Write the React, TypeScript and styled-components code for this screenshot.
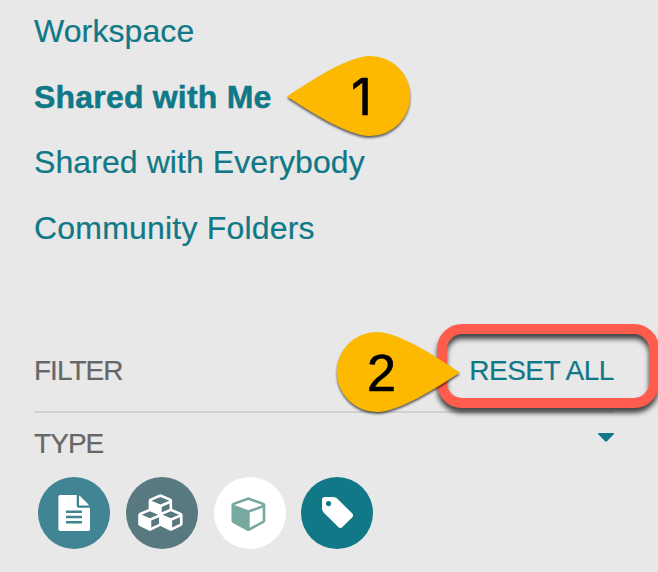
import React from 'react';
import styled, { createGlobalStyle } from 'styled-components';

const Global = createGlobalStyle`
  *, *::before, *::after { box-sizing: border-box; }
  body {
    margin: 0;
    background: #e8e8e8;
    font-family: 'Liberation Sans', Arial, sans-serif;
    overflow: hidden;
  }
`;

const Sidebar = styled.aside`
  position: relative;
  width: 658px;
  height: 572px;
  overflow: hidden;
  padding: 13px 44px 0 34px;
  background: #e8e8e8;
`;

const Nav = styled.nav`
  display: flex;
  flex-direction: column;
  align-items: flex-start;
  gap: 29.6px;
`;

const NavLink = styled.a<{ $active?: boolean; $spacing?: number }>`
  color: #107887;
  font-size: 32px;
  line-height: 36px;
  white-space: nowrap;
  font-weight: ${p => (p.$active ? 700 : 400)};
  letter-spacing: ${p => p.$spacing ?? 0}px;
  -webkit-text-stroke: ${p => (p.$active ? 0.5 : 0.2)}px currentColor;
`;

const FilterHeader = styled.header`
  display: flex;
  justify-content: space-between;
  align-items: center;
  height: 82px;
  margin-top: 85px;
  border-bottom: 2px solid #d0d0d0;
`;

const Label = styled.span<{ $spacing: number }>`
  color: #666;
  font-size: 28px;
  line-height: 32px;
  letter-spacing: ${p => p.$spacing}px;
  -webkit-text-stroke: 0.2px currentColor;
`;

const ResetLink = styled.a`
  color: #107887;
  font-size: 28px;
  line-height: 32px;
  letter-spacing: -0.45px;
  white-space: nowrap;
  -webkit-text-stroke: 0.2px currentColor;
`;

const TypeHeader = styled.div`
  display: flex;
  justify-content: space-between;
  align-items: center;
  height: 32px;
  margin-top: 15px;
`;

const Caret = styled.svg`
  display: block;
  width: 16px;
  height: 9px;
  margin-bottom: 13px;
`;

const TypeList = styled.div`
  display: flex;
  gap: 15.8px;
  margin: 17px 0 0 4px;
`;

const TypeButton = styled.button<{ $bg: string }>`
  width: 72px;
  height: 72px;
  padding: 0;
  border: 0;
  border-radius: 50%;
  background: ${p => p.$bg};
  svg { display: block; width: 72px; height: 72px; }
`;

const Highlight = styled.div`
  position: absolute;
  left: 437px;
  top: 324px;
  width: 222px;
  height: 84px;
  border: 10px solid #ff5c4d;
  border-radius: 25px;
  filter: drop-shadow(0 5px 2.5px rgba(0, 0, 0, 0.7));
`;

const Callout = styled.div<{ $x: number; $y: number; $side: 'left' | 'right' }>`
  position: absolute;
  left: ${p => p.$x}px;
  top: ${p => p.$y}px;
  width: 124px;
  height: 80px;
  display: flex;
  justify-content: ${p => (p.$side === 'left' ? 'flex-end' : 'flex-start')};
  svg {
    position: absolute;
    inset: 0;
    overflow: visible;
    transform: ${p => (p.$side === 'left' ? 'none' : 'scaleX(-1)')};
    filter: drop-shadow(0 2px 1.2px rgba(0, 0, 0, 0.6));
  }
`;

const Digit = styled.span<{ $font: string; $size: number; $shift: number }>`
  position: relative;
  width: 91px;
  padding-right: ${p => p.$shift}px;
  text-align: center;
  font-family: ${p => p.$font}, sans-serif;
  font-size: ${p => p.$size}px;
  line-height: 82px;
  color: #000;
  -webkit-text-stroke: 0.7px #000;
`;

interface MarkerProps {
  x: number;
  y: number;
  side: 'left' | 'right';
  font: string;
  size: number;
  shift?: number;
  children: React.ReactNode;
}

const Marker = ({ x, y, side, font, size, shift = 0, children }: MarkerProps) => (
  <Callout $x={x} $y={y} $side={side}>
    <svg width="124" height="80" viewBox="0 0 124 80">
      <path d="M0 40.500C22 26 61 0 83 0a40.300 40 0 0 1 0 80C61 80 22 55 0 40.500Z" fill="#fcb900" />
    </svg>
    <Digit $font={font} $size={size} $shift={shift}>{children}</Digit>
  </Callout>
);

const DocumentIcon = () => (
  <svg viewBox="0 0 72 72">
    <path d="M22.500 18H38.700v10.700q0 2 2 2H52V52.200q0 1.800-1.800 1.800h-28q-1.800 0-1.800-1.800V19.800q0-1.800 1.800-1.800Z" fill="#fff" />
    <path d="M41 18.600Q42 19 42.500 19.500L50 27Q50.500 27.500 51 28.500H41Z" fill="#fff" />
    <path d="M28 34.700h16M28 40h16M28 45.200h16" stroke="#418594" strokeWidth="2.400" />
  </svg>
);

const CubesIcon = () => (
  <svg viewBox="0 0 72 72">
    <path
      transform="translate(12.200 17.300) scale(.0204)"
      d="M640 1632l384-192v-314l-384 164v342zm-64-454l404-173-404-173-404 173zm1088 454l384-192v-314l-384 164v342zm-64-454l404-173-404-173-404 173zm-448-293l384-165v-266l-384 164v267zm-64-379l441-189-441-189-441 189zm1088 518v416q0 36-19 67t-52 47l-448 224q-25 14-57 14t-57-14l-448-224q-4-2-7-4-2 2-7 4l-448 224q-25 14-57 14t-57-14l-448-224q-33-16-52-47t-19-67v-416q0-38 21.500-70t56.500-48l434-186v-400q0-38 21.500-70t56.500-48l448-192q23-10 50-10t50 10l448 192q35 16 56.500 48t21.500 70v400l434 186q36 16 57 48t21 70z"
      fill="#fff"
      fillRule="evenodd"
    />
  </svg>
);

const CubeIcon = () => (
  <svg viewBox="0 0 72 72">
    <path
      transform="translate(17.500 17.700) scale(.0203)"
      d="M896 1629l640-349v-636l-640 233v752zm-64-865l698-254-698-254-698 254zm832-252v768q0 35-18 65t-49 47l-704 384q-28 16-61 16t-61-16l-704-384q-31-17-49-47t-18-65v-768q0-40 23-73t61-47l704-256q22-8 44-8t44 8l704 256q38 14 61 47t23 73z"
      fill="#77a99f"
      fillRule="evenodd"
    />
  </svg>
);

const TagIcon = () => (
  <svg viewBox="0 0 72 72">
    <path
      transform="translate(21 17.400) scale(.0205)"
      d="M448 448q0-53-37.500-90.500t-90.500-37.500-90.500 37.500-37.500 90.500 37.500 90.500 90.500 37.500 90.500-37.500 37.500-90.500zm1067 576q0 53-37 90l-491 492q-39 37-91 37-53 0-90-37l-715-716q-38-37-64.500-101t-26.500-117v-416q0-52 38-90t90-38h416q53 0 117 26.500t102 64.500l715 714q37 39 37 91z"
      fill="#fff"
      fillRule="evenodd"
    />
  </svg>
);

export default function App() {
  return (
    <>
      <Global />
      <Sidebar>
        <Nav>
          <NavLink $spacing={0.1}>Workspace</NavLink>
          <NavLink $active $spacing={0.2}>Shared with Me</NavLink>
          <NavLink $spacing={0.08}>Shared with Everybody</NavLink>
          <NavLink $spacing={0.2}>Community Folders</NavLink>
        </Nav>
        <FilterHeader>
          <Label $spacing={-1}>FILTER</Label>
          <ResetLink>RESET ALL</ResetLink>
        </FilterHeader>
        <TypeHeader>
          <Label $spacing={-0.95}>TYPE</Label>
          <Caret viewBox="0 0 16 9">
            <path d="M0 0H16L15.500 1.500 9 8.300Q8 9.200 7 8.300L.5 1.500Z" fill="#107887" />
          </Caret>
        </TypeHeader>
        <TypeList>
          <TypeButton $bg="#418594" aria-label="Documents"><DocumentIcon /></TypeButton>
          <TypeButton $bg="#58797f" aria-label="Collections"><CubesIcon /></TypeButton>
          <TypeButton $bg="#fff" aria-label="Objects"><CubeIcon /></TypeButton>
          <TypeButton $bg="#107887" aria-label="Tags"><TagIcon /></TypeButton>
        </TypeList>
        <Highlight />
        <Marker x={287} y={56} side="left" font="Inter" size={50.5} shift={8}>1</Marker>
        <Marker x={336} y={332} side="right" font="'Liberation Sans'" size={52}>2</Marker>
      </Sidebar>
    </>
  );
}
